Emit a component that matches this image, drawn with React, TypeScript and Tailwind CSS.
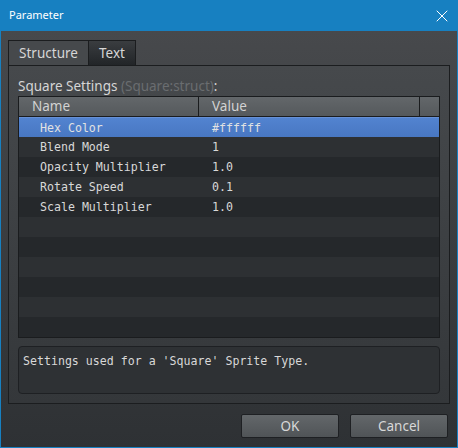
import { X } from "lucide-react";

const rows: [string, string][] = [
  ["Hex Color", "#ffffff"],
  ["Blend Mode", "1"],
  ["Opacity Multiplier", "1.0"],
  ["Rotate Speed", "0.1"],
  ["Scale Multiplier", "1.0"],
];

const ui = "font-['Noto_Sans',sans-serif]";
const mono = "font-['DejaVu_Sans_Mono',monospace]";

export default function App() {
  const filled = [...rows, ...Array.from({ length: 11 - rows.length }, () => ["", ""] as [string, string])];
  return (
    <div className={`flex h-[448px] w-[458px] flex-col ${ui}`}>
      {/* title bar */}
      <div className="flex h-[31px] shrink-0 items-center justify-between bg-[#1780c1] pl-[9px] pr-[6px] text-[11px] text-white">
        <span>Parameter</span>
        <X size={20} strokeWidth={1.2} />
      </div>

      <div className="flex flex-1 flex-col border-x border-b border-[#1780c1] bg-gradient-to-b from-[#47494c] to-[#2e3134] px-[7px] pt-[9px]">
        {/* tabs */}
        <div className="flex h-[25px] text-[13.5px]">
          <div className="flex w-[81px] items-center justify-center border border-b-0 border-[#1b1d1f] bg-[#46494c] text-[#d6d6d6]">
            Structure
          </div>
          <div className="flex w-[47px] items-center justify-center border border-b-0 border-l-0 border-[#1b1d1f] bg-gradient-to-b from-[#3a3d40] to-[#222528] text-[#d6d6d6]">
            Text
          </div>
        </div>

        {/* panel */}
        <div className="flex h-[339px] flex-col border border-[#1b1d1f] bg-gradient-to-b from-[#46494c] to-[#34373a] px-[9px] pt-[12px] pb-[9px]">
          <div className="mb-[2px] h-[16px] text-[13.5px] leading-[16px] text-[#d6d6d6]">
            Square Settings <span className="text-[#6a6d70]">(Square:struct)</span>:
          </div>

          {/* table */}
          <div className="flex flex-col border border-[#1a1c1e] bg-[#2c2f32]">
            <div className="flex h-[20px] border-b border-[#1a1c1e] bg-gradient-to-b from-[#63676a] to-[#55595c] text-[13.5px] leading-[19px] text-[#d2d2d2]">
              <div className="w-[180px] border-r border-[#1a1c1e] pl-[13px]">Name</div>
              <div className="w-[221px] border-r border-[#1a1c1e] pl-[13px]">Value</div>
              <div className="flex-1" />
            </div>
            {filled.map(([name, value], i) => (
              <div
                key={i}
                className={
                  i === 0
                    ? `flex h-[20px] border-t border-[#6690d6] bg-gradient-to-b from-[#5283d0] to-[#4877c2] pt-[1px] text-[11.6px] leading-[19px] text-[#e2e2e2] ${mono}`
                    : i % 2 === 1
                      ? `flex h-[20px] bg-[#2d3033] pt-[1px] text-[11.6px] leading-[19px] text-[#d8d8d8] ${mono}`
                      : `flex h-[20px] bg-[#25282b] pt-[1px] text-[11.6px] leading-[19px] text-[#d8d8d8] ${mono}`
                }
              >
                <div className="w-[180px] pl-[21px]">{name}</div>
                <div className="pl-[13px]">{value}</div>
              </div>
            ))}
          </div>

          {/* description */}
          <div className={`mt-[8px] h-[48px] rounded-[4px] border border-[#1e2023] bg-[#2e3134] px-[4px] pt-[6px] text-[11.6px] text-[#d8d8d8] ${mono}`}>
            Settings used for a 'Square' Sprite Type.
          </div>
        </div>

        {/* buttons */}
        <div className="mt-[10px] flex justify-end gap-[11px] pr-[2px]">
          <button className="h-[24px] w-[98px] rounded-[2px] border border-[#1e2023] bg-gradient-to-b from-[#63676a] to-[#505457] text-[13.5px] text-[#d8d8d8]">
            OK
          </button>
          <button className="h-[24px] w-[98px] rounded-[2px] border border-[#1e2023] bg-gradient-to-b from-[#63676a] to-[#505457] text-[13.5px] text-[#d8d8d8]">
            Cancel
          </button>
        </div>
      </div>
    </div>
  );
}
